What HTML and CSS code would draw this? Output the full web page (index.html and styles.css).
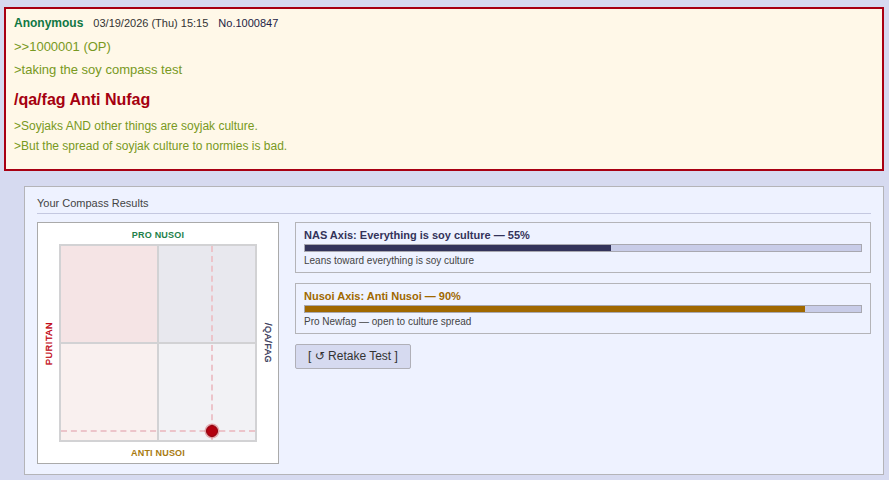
FILE: index.html
```html
<!DOCTYPE html>
<html>
<head>
<meta charset="utf-8">
<link rel="stylesheet" href="styles.css">
</head>
<body>
<div class="post">
  <div class="post-head">
    <span class="name">Anonymous</span>
    <span class="date">03/19/2026 (Thu) 15:15</span>
    <span class="postno">No.1000847</span>
  </div>
  <div class="quotelink">&gt;&gt;1000001 (OP)</div>
  <div class="greentext first">&gt;taking the soy compass test</div>
  <div class="post-title">/qa/fag Anti Nufag</div>
  <div class="greentext small">&gt;Soyjaks AND other things are soyjak culture.</div>
  <div class="greentext small second">&gt;But the spread of soyjak culture to normies is bad.</div>
</div>

<div class="results">
  <div class="results-head">Your Compass Results</div>
  <div class="results-body">
    <div class="compass">
      <div class="lbl lbl-top">PRO NUSOI</div>
      <div class="lbl lbl-left">PURITAN</div>
      <div class="plot">
        <div class="quad q-tl"></div>
        <div class="quad q-tr"></div>
        <div class="quad q-bl"></div>
        <div class="quad q-br"></div>
        <div class="guide guide-v" style="left: 77.6%"></div>
        <div class="guide guide-h" style="top: 95.4%"></div>
        <div class="dot" style="left: 77.6%; top: 95.4%"></div>
      </div>
      <div class="lbl lbl-right">/QA/FAG</div>
      <div class="lbl lbl-bottom">ANTI NUSOI</div>
    </div>
    <div class="axes">
      <div class="axis">
        <div class="axis-title nas">NAS Axis: Everything is soy culture — 55%</div>
        <div class="bar"><div class="fill fill-nas" style="width: 55%"></div></div>
        <div class="axis-desc">Leans toward everything is soy culture</div>
      </div>
      <div class="axis">
        <div class="axis-title nusoi">Nusoi Axis: Anti Nusoi — 90%</div>
        <div class="bar"><div class="fill fill-nusoi" style="width: 90%"></div></div>
        <div class="axis-desc">Pro Newfag — open to culture spread</div>
      </div>
      <button class="retake">[ ↺ Retake Test ]</button>
    </div>
  </div>
</div>
</body>
</html>
```

FILE: styles.css
```css
html, body {
  margin: 0;
  padding: 0;
}
body {
  background: #d6daf0;
  font-family: "Liberation Sans", Arial, "DejaVu Sans", sans-serif;
  color: #333;
  padding-top: 7px;
  height: 480px;
  box-sizing: border-box;
  overflow: hidden;
}

/* ---------- post ---------- */
.post {
  margin: 0 5px 0 4px;
  border: 2px solid #a80012;
  background: #fff8e8;
  padding: 6px 8px 15px;
}
.post-head {
  display: flex;
  align-items: baseline;
  gap: 10px;
  line-height: 16px;
}
.name {
  font-size: 12px;
  font-weight: bold;
  color: #117743;
}
.date {
  font-size: 11px;
  color: #333;
}
.postno {
  font-size: 11px;
  color: #222244;
}
.quotelink {
  margin-top: 7px;
  font-size: 13px;
  line-height: 18px;
  color: #789922;
}
.greentext {
  color: #789922;
}
.greentext.first {
  margin-top: 5px;
  font-size: 13px;
  line-height: 18px;
}
.post-title {
  margin-top: 11px;
  font-size: 16px;
  line-height: 20px;
  font-weight: bold;
  color: #a5000f;
}
.greentext.small {
  margin-top: 8px;
  font-size: 12px;
  line-height: 16px;
}
.greentext.small.second {
  margin-top: 4px;
}

/* ---------- results ---------- */
.results {
  margin: 15px 5px 0 24px;
  background: #eef2ff;
  border: 1px solid #b4b4b8;
  padding: 9px 12px 10px;
}
.results-head {
  font-size: 11px;
  line-height: 14px;
  color: #444;
  padding-bottom: 3px;
  border-bottom: 1px solid #c4c8e0;
  margin-bottom: 8px;
}
.results-body {
  display: flex;
  gap: 16px;
  align-items: flex-start;
}

/* compass */
.compass {
  width: 240px;
  height: 240px;
  flex: none;
  background: #fff;
  border: 1px solid #aaa;
  display: grid;
  grid-template-columns: 21px 198px 21px;
  grid-template-rows: 21px 198px 21px;
}
.lbl {
  font-size: 9px;
  font-weight: bold;
  letter-spacing: 0.2px;
  display: flex;
  align-items: center;
  justify-content: center;
  white-space: nowrap;
}
.lbl-top {
  grid-column: 2;
  grid-row: 1;
  color: #22804a;
  padding-top: 3px;
}
.lbl-bottom {
  grid-column: 2;
  grid-row: 3;
  color: #a87a10;
}
.lbl-left {
  grid-column: 1;
  grid-row: 2;
  color: #c0000f;
  writing-mode: vertical-rl;
  transform: rotate(180deg);
  font-weight: normal;
  -webkit-text-stroke: 0.3px #c0000f;
  letter-spacing: 0.6px;
}
.lbl-right {
  grid-column: 3;
  grid-row: 2;
  color: #333355;
  writing-mode: vertical-rl;
  font-weight: normal;
  -webkit-text-stroke: 0.3px #333355;
  letter-spacing: 0.6px;
}
.plot {
  grid-column: 2;
  grid-row: 2;
  position: relative;
  border: 2px solid #d2d2d4;
  background: #d2d2d4;
  display: grid;
  grid-template-columns: 1fr 1fr;
  grid-template-rows: 1fr 1fr;
  gap: 2px;
}
.q-tl { background: #f5e4e5; }
.q-tr { background: #e8e8ee; }
.q-bl { background: #f9f0ef; }
.q-br { background: #f2f2f5; }
.guide {
  position: absolute;
}
.guide-v {
  top: 0;
  bottom: 0;
  width: 0;
  margin-left: -1px;
  border-left: 2px dashed #ecc4ca;
}
.guide-h {
  left: 0;
  right: 0;
  height: 0;
  margin-top: -1px;
  border-top: 2px dashed #ecc4ca;
}
.dot {
  position: absolute;
  width: 10px;
  height: 10px;
  margin: -6px 0 0 -6px;
  border-radius: 50%;
  background: #b3000f;
  border: 1px solid #8e000c;
  box-shadow: 0 0 0 1.5px rgba(200, 40, 50, 0.35);
}

/* axes */
.axes {
  flex: 1;
  display: flex;
  flex-direction: column;
  gap: 10px;
}
.axis {
  border: 1px solid #b4b4b8;
  padding: 6px 8px 5px;
}
.axis-title {
  font-size: 11px;
  font-weight: bold;
  line-height: 13px;
}
.axis-title.nas { color: #33335a; }
.axis-title.nusoi { color: #a06800; }
.bar {
  margin-top: 2px;
  height: 6px;
  border: 1px solid #a8a8b0;
  background: #c8cce8;
}
.fill {
  height: 100%;
}
.fill-nas { background: #33335a; }
.fill-nusoi { background: #a06800; }
.axis-desc {
  margin-top: 3px;
  font-size: 10px;
  line-height: 12px;
  color: #444;
}
.retake {
  align-self: flex-start;
  font-family: "Liberation Sans", Arial, "DejaVu Sans", sans-serif;
  font-size: 12px;
  line-height: 13px;
  padding: 5px 12px;
  background: #d6daf0;
  border: 1px solid #b0b0b8;
  border-radius: 2px;
  color: #333;
}
```
